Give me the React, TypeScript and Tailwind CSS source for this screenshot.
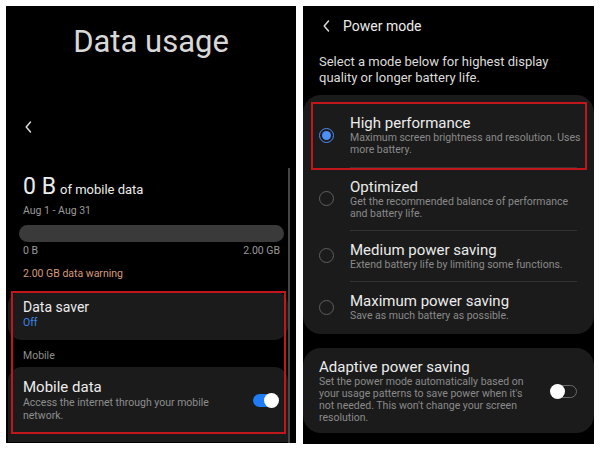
import React from 'react';

const Chevron = () => (
  <svg width="7" height="12" viewBox="0 0 7 12" fill="none">
    <path d="M5.5 1 L1.2 6 L5.5 11" stroke="#e0e0e0" strokeWidth="1.4" strokeLinecap="round" strokeLinejoin="round" />
  </svg>
);

const Radio = ({ on }: { on?: boolean }) =>
  on ? (
    <div className="w-[15px] h-[15px] rounded-full border-[1.5px] border-[#4d8ef7] flex items-center justify-center">
      <div className="w-[9px] h-[9px] rounded-full bg-[#4d8ef7]" />
    </div>
  ) : (
    <div className="w-[15px] h-[15px] rounded-full border-[1.5px] border-[#5f5f5f]" />
  );

const modes = [
  { title: 'High performance', desc: ['Maximum screen brightness and resolution. Uses', 'more battery.'], on: true },
  { title: 'Optimized', desc: ['Get the recommended balance of performance', 'and battery life.'] },
  { title: 'Medium power saving', desc: ['Extend battery life by limiting some functions.'] },
  { title: 'Maximum power saving', desc: ['Save as much battery as possible.'] },
];

const DataUsage = () => (
  <div className="relative w-[290px] h-[437px] bg-black overflow-hidden flex flex-col text-[#ececec]">
    <h1 className="pt-[18px] text-center text-[31px] leading-[36px] text-[#d8d8d8]">Data usage</h1>
    <div className="mt-[61px] pl-[19px] h-[12px]">
      <Chevron />
    </div>
    <div className="mt-[40px] px-[17px] flex items-baseline gap-[4px]">
      <span className="text-[23px] leading-[28px]">0 B</span>
      <span className="text-[13px] leading-[16px]">of mobile data</span>
    </div>
    <div className="mt-[3px] px-[17px] text-[10.5px] leading-[14px] text-[#9a9a9a]">Aug 1 - Aug 31</div>
    <div className="mt-[7px] ml-[13px] mr-[12px] h-[17px] rounded-full bg-[#3a3a3a]" />
    <div className="mt-[2px] pl-[17px] pr-[16px] flex justify-between text-[10.5px] leading-[14px] text-[#9a9a9a]">
      <span>0 B</span>
      <span>2.00 GB</span>
    </div>
    <div className="mt-[9px] px-[17px] text-[10.5px] leading-[14px] text-[#d79a7c]">2.00 GB data warning</div>
    <div className="relative mt-[10px]">
      <div className="ml-[2px] mr-[8px] rounded-[14px] bg-[#1b1b1b] pl-[15px] pt-[7px] pb-[11px]">
        <div className="text-[14px] leading-[18px]">Data saver</div>
        <div className="text-[10.5px] leading-[13px] text-[#3f86e8]">Off</div>
      </div>
      <div className="pl-[17px] pt-[9px] pb-[4px] text-[10.5px] leading-[14px] text-[#8e8e8e]">Mobile</div>
      <div className="ml-[2px] mr-[8px] rounded-t-[14px] bg-[#1b1b1b] pl-[15px] pr-[9px] pt-[11px] pb-[20px] flex items-center">
        <div className="flex-1">
          <div className="text-[15px] leading-[18px]">Mobile data</div>
          <div className="w-[195px] text-[10.5px] leading-[13px] text-[#8e8e8e]">
            Access the internet through your mobile network.
          </div>
        </div>
        <div className="relative w-[26px] h-[15px] flex items-center">
          <div className="w-[24px] h-[13px] rounded-full bg-[#1f7cf5]" />
          <div className="absolute right-0 top-0 w-[15px] h-[15px] rounded-full bg-white" />
        </div>
      </div>
      <div className="absolute top-0 left-[5px] right-[10px] h-[143px] border-2 border-[#c0161c]" />
    </div>
    <div className="absolute right-[6px] top-[162px] bottom-0 w-[2px] bg-[#454545]" />
  </div>
);

const PowerMode = () => (
  <div className="w-[291px] h-[438px] bg-black overflow-hidden flex flex-col text-[#ececec]">
    <div className="pt-[11px] pl-[20px] flex items-center h-[29px]">
      <Chevron />
      <span className="ml-[13px] text-[14px] leading-[18px]">Power mode</span>
    </div>
    <p className="mt-[19px] pl-[16px] text-[13px] leading-[16px] text-[#dcdcdc]">
      Select a mode below for highest display
      <br />
      quality or longer battery life.
    </p>
    <div className="relative mt-[9px] rounded-[18px] bg-[#1b1b1b] pt-[9px]">
      {modes.map((m, i) => (
        <div key={m.title} className="flex items-center">
          <div className="w-[47px] shrink-0 flex justify-center">
            <Radio on={m.on} />
          </div>
          <div
            className={
              i === 0
                ? 'flex-1 min-w-0 mr-[17px] pt-[10px] pb-[11px]'
                : i < modes.length - 1
                  ? 'flex-1 min-w-0 mr-[17px] pt-[10px] pb-[10px] border-t border-[#333333]'
                  : 'flex-1 min-w-0 mr-[17px] pt-[10px] pb-[12px] border-t border-[#333333]'
            }
          >
            <div className="text-[15px] leading-[18px]">{m.title}</div>
            <div className="text-[10.5px] leading-[12px] text-[#8a8a8a] whitespace-nowrap">
              {m.desc.map((d) => (
                <div key={d}>{d}</div>
              ))}
            </div>
          </div>
        </div>
      ))}
      <div className="absolute top-[7px] left-[8px] right-[7px] h-[68px] border-2 border-[#c0161c]" />
    </div>
    <div className="mt-[14px] rounded-[18px] bg-[#1b1b1b] pl-[16px] pr-[17px] pt-[10px] pb-[9px] flex items-center">
      <div className="flex-1">
        <div className="text-[15px] leading-[18px]">Adaptive power saving</div>
        <div className="w-[215px] text-[10.5px] leading-[12px] text-[#8a8a8a]">
          Set the power mode automatically based on your usage patterns to save power when it's not needed. This
          won't change your screen resolution.
        </div>
      </div>
      <div className="relative w-[27px] h-[15px] flex items-center justify-end">
        <div className="w-[24px] h-[13px] rounded-full border border-[#6a6a6a]" />
        <div className="absolute left-0 top-0 w-[15px] h-[15px] rounded-full bg-white" />
      </div>
    </div>
  </div>
);

export default function App() {
  return (
    <div className="w-[600px] h-[450px] bg-white flex pt-[6px] pl-[6px] gap-[7px] font-['Roboto','Noto_Sans',sans-serif]">
      <DataUsage />
      <PowerMode />
    </div>
  );
}
